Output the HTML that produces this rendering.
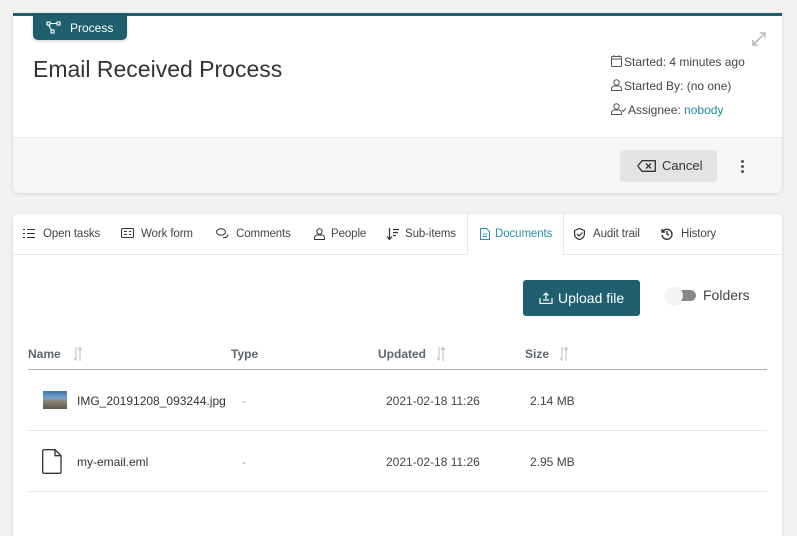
<!DOCTYPE html>
<html><head><meta charset="utf-8"><style>
*{box-sizing:border-box;margin:0;padding:0}
html{width:797px;height:536px;overflow:hidden}
body{width:797px;height:536px;overflow:hidden;background:#f3f2f1;font-family:"Liberation Sans",sans-serif;color:#333;position:relative}
.card{position:absolute;left:13px;width:769px;background:#fff;border-radius:4px;box-shadow:0 1px 4px rgba(0,0,0,.12)}
.abs{position:absolute}
.t{font-size:12px;color:#444;white-space:nowrap}
.tab{font-size:11.5px;letter-spacing:-0.1px}
svg{display:block}
</style></head><body>
<div class="card" style="top:13px;height:180px;border-top:3px solid #1f5f6e;border-radius:0 0 6px 6px;overflow:visible">
  <div class="abs" style="left:20px;top:0;width:94px;height:24px;background:#1f5f6e;border-radius:0 0 5px 5px;color:#fff;font-size:12px;box-shadow:0 1px 3px rgba(0,0,0,.2)">
    <svg class="abs" style="left:13px;top:5px" width="16" height="14" viewBox="0 0 16 14" fill="none" stroke="#fff" stroke-width="1.1"><rect x="1" y="1" width="3" height="3"/><rect x="11" y="1" width="3" height="3"/><rect x="5" y="9" width="3" height="3"/><path d="M4 2.5h7M2.5 4l3 5"/></svg>
    <span class="abs" style="left:37px;top:5px">Process</span>
  </div>
  <div class="abs" style="left:20px;top:40px;font-size:23px;color:#333">Email Received Process</div>
  <svg class="abs" style="left:738px;top:15px" width="16" height="16" viewBox="0 0 16 16" stroke="#b5bcc3" stroke-width="1.6" fill="none"><path d="M2 14L14 2M9 2h5v5M2 9v5h5"/></svg>
  <div class="abs t" style="left:598px;top:39px">
    <svg class="abs" style="left:0;top:0" width="11" height="12" viewBox="0 0 11 12" fill="none" stroke="#555"><rect x=".5" y="1.5" width="10" height="10" rx="1"/><path d="M.5 4h10M3 0v2M8 0v2"/></svg>
    <span style="margin-left:13px">Started: 4 minutes ago</span></div>
  <div class="abs t" style="left:598px;top:63px">
    <svg class="abs" style="left:0;top:0" width="11" height="12" viewBox="0 0 11 12" fill="none" stroke="#555"><circle cx="5.5" cy="3.5" r="2.7"/><path d="M.5 11.5v-1.5a3 3 0 0 1 3-3h4a3 3 0 0 1 3 3v1.5z"/></svg>
    <span style="margin-left:13px">Started By: (no one)</span></div>
  <div class="abs t" style="left:598px;top:87px">
    <svg class="abs" style="left:0;top:0" width="15" height="12" viewBox="0 0 15 12" fill="none" stroke="#555"><circle cx="5.5" cy="3.5" r="2.7"/><path d="M.5 11.5v-1.5a3 3 0 0 1 3-3h4a3 3 0 0 1 3 3v1.5zM11 7l1.5 1.5L15 5"/></svg>
    <span style="margin-left:17px">Assignee: <span style="color:#1d8aa0">nobody</span></span></div>
  <div class="abs" style="left:0;top:121px;width:769px;height:56px;background:#f5f6f7;border-top:1px solid #e6e8ea;border-radius:0 0 6px 6px">
    <div class="abs" style="left:607px;top:12px;width:97px;height:32px;background:#e2e3e4;border-radius:3px;font-size:13px;color:#333">
      <svg class="abs" style="left:17px;top:10px" width="19" height="12" viewBox="0 0 19 12" fill="none" stroke="#333" stroke-width="1.3"><path d="M5 .7h13.3v10.6H5L.8 6z"/><path d="M9 3.5l5 5M14 3.5l-5 5"/></svg>
      <span class="abs" style="left:42px;top:8px">Cancel</span></div>
    <div class="abs" style="left:728px;top:22px;width:3px">
      <div style="width:3px;height:3px;background:#555;border-radius:50%;margin-bottom:2px"></div>
      <div style="width:3px;height:3px;background:#555;border-radius:50%;margin-bottom:2px"></div>
      <div style="width:3px;height:3px;background:#555;border-radius:50%"></div></div>
  </div>
</div>

<div class="card" style="top:214px;height:330px">
  <div class="abs" style="left:0;top:40px;width:769px;height:1px;background:#e6e8ea"></div>
  <div class="abs" style="left:454px;top:0;width:97px;height:41px;background:#fff;border-left:1px solid #e6e8ea;border-right:1px solid #e6e8ea"></div>
  <div class="abs t tab" style="left:10px;top:14px">
    <svg class="abs" style="left:0;top:0" width="12" height="11" viewBox="0 0 12 11" stroke="#333" fill="none"><path d="M4 1.5h8M4 5.5h8M4 9.5h8M0 1.5h2M0 5.5h2M0 9.5h2"/></svg><span style="margin-left:20px">Open tasks</span></div>
  <div class="abs t tab" style="left:108px;top:14px">
    <svg class="abs" style="left:0;top:0" width="13" height="10" viewBox="0 0 13 10" stroke="#333" fill="none"><rect x=".5" y=".5" width="12" height="9" rx="1"/><path d="M3 3.5h3M3 6.5h3M8 3.5h2M8 6.5h2"/></svg><span style="margin-left:20px">Work form</span></div>
  <div class="abs t tab" style="left:203px;top:14px">
    <svg class="abs" style="left:0;top:0" width="13" height="11" viewBox="0 0 13 11" stroke="#333" fill="none"><ellipse cx="5" cy="4" rx="4.5" ry="3.3"/><path d="M7 9.5c2.5.5 5-.5 5-3"/></svg><span style="margin-left:20px">Comments</span></div>
  <div class="abs t tab" style="left:301px;top:14px">
    <svg class="abs" style="left:0;top:0" width="11" height="12" viewBox="0 0 11 12" fill="none" stroke="#333"><circle cx="5.5" cy="3.5" r="2.7"/><path d="M.5 11.5v-1.5a3 3 0 0 1 3-3h4a3 3 0 0 1 3 3v1.5z"/></svg><span style="margin-left:17px">People</span></div>
  <div class="abs t tab" style="left:374px;top:14px">
    <svg class="abs" style="left:0;top:0" width="12" height="12" viewBox="0 0 12 12" fill="none" stroke="#333" stroke-width="1.2"><path d="M2.5 0v11M0 8.5l2.5 3 2.5-3M6 1.5h6M6 4.5h5M6 7.5h3"/></svg><span style="margin-left:18px">Sub-items</span></div>
  <div class="abs t tab" style="left:467px;top:14px;color:#2a90a8">
    <svg class="abs" style="left:0;top:0" width="10" height="12" viewBox="0 0 10 12" fill="none" stroke="#2a90a8"><path d="M.5.5h6l3 3v8h-9z M3 6h4M3 8.5h4"/></svg><span style="margin-left:15px">Documents</span></div>
  <div class="abs t tab" style="left:561px;top:14px">
    <svg class="abs" style="left:0;top:0" width="11" height="12" viewBox="0 0 11 12" fill="none" stroke="#333" stroke-width="1.2"><path d="M5.5.6L10.4 2.5v3.5c0 3-2.5 5-4.9 5.6C3.1 11 .6 9 .6 6V2.5z M3 6l2 2 3.5-3.5"/></svg><span style="margin-left:19px">Audit trail</span></div>
  <div class="abs t tab" style="left:648px;top:14px">
    <svg class="abs" style="left:0;top:0" width="12" height="12" viewBox="0 0 12 12" fill="none" stroke="#333" stroke-width="1.4"><path d="M1.5 4A5 5 0 1 1 1 7M1 1v3h3M6 3v3l2 1.5"/></svg><span style="margin-left:20px">History</span></div>

  <div class="abs" style="left:510px;top:66px;width:117px;height:36px;background:#1f5f6e;border-radius:3px;color:#fff;font-size:14px">
    <svg class="abs" style="left:16px;top:12px" width="14" height="12" viewBox="0 0 14 12" fill="none" stroke="#fff" stroke-width="1.2"><path d="M1 6v5.5h12V6M4 8h6M7 7V1M4.5 3.5L7 1l2.5 2.5"/></svg>
    <span class="abs" style="left:35px;top:10px">Upload file</span></div>
  <div class="abs" style="left:655px;top:76px;width:28px;height:11px;background:#888;border-radius:6px"></div>
  <div class="abs" style="left:653px;top:73px;width:17px;height:17px;background:#f4f4f4;border-radius:50%;box-shadow:0 1px 2px rgba(0,0,0,.1)"></div>
  <div class="abs" style="left:690px;top:73px;font-size:14px;color:#444">Folders</div>

  <div class="abs" style="left:15px;top:133px;font-size:12px;font-weight:bold;color:#5b6570">Name</div>
  <div class="abs" style="left:218px;top:133px;font-size:12px;font-weight:bold;color:#5b6570">Type</div>
  <div class="abs" style="left:365px;top:133px;font-size:12px;font-weight:bold;color:#5b6570">Updated</div>
  <div class="abs" style="left:512px;top:133px;font-size:12px;font-weight:bold;color:#5b6570">Size</div>
  <svg class="abs" style="left:60px;top:133px" width="10" height="14" viewBox="0 0 10 14" stroke="#b5bcc3" fill="none"><path d="M3 0v13M1 11l2 2.5M7 14V1M5 3l2-2.5 2 2.5"/></svg>
  <svg class="abs" style="left:423px;top:133px" width="10" height="14" viewBox="0 0 10 14" stroke="#b5bcc3" fill="none"><path d="M3 0v13M1 11l2 2.5M7 14V1M5 3l2-2.5 2 2.5"/></svg>
  <svg class="abs" style="left:546px;top:133px" width="10" height="14" viewBox="0 0 10 14" stroke="#b5bcc3" fill="none"><path d="M3 0v13M1 11l2 2.5M7 14V1M5 3l2-2.5 2 2.5"/></svg>
  <div class="abs" style="left:15px;top:155px;width:739px;height:1px;background:#aab4be"></div>

  <div class="abs" style="left:30px;top:177px;width:24px;height:18px;background:linear-gradient(#3d73a8 0,#7aa6cc 40%,#8a8577 55%,#5d5a4c 100%)"></div>
  <div class="abs" style="left:64px;top:180px;font-size:12px;color:#333">IMG_20191208_093244.jpg</div>
  <div class="abs" style="left:229px;top:180px;font-size:12px;color:#999">-</div>
  <div class="abs" style="left:373px;top:180px;font-size:12px;color:#444">2021-02-18 11:26</div>
  <div class="abs" style="left:517px;top:180px;font-size:12px;color:#444">2.14 MB</div>
  <div class="abs" style="left:15px;top:216px;width:739px;height:1px;background:#e6e8ea"></div>

  <svg class="abs" style="left:29px;top:235px" width="20" height="25" viewBox="0 0 20 25" fill="none" stroke="#333" stroke-width="1.3"><path d="M2 .7h11l6 6V23a1.3 1.3 0 0 1-1.3 1.3H2A1.3 1.3 0 0 1 .7 23V2A1.3 1.3 0 0 1 2 .7zM13 .7v6h6"/></svg>
  <div class="abs" style="left:64px;top:241px;font-size:12px;color:#333">my-email.eml</div>
  <div class="abs" style="left:229px;top:241px;font-size:12px;color:#999">-</div>
  <div class="abs" style="left:373px;top:241px;font-size:12px;color:#444">2021-02-18 11:26</div>
  <div class="abs" style="left:517px;top:241px;font-size:12px;color:#444">2.95 MB</div>
  <div class="abs" style="left:15px;top:277px;width:739px;height:1px;background:#e6e8ea"></div>
</div>
</body></html>
